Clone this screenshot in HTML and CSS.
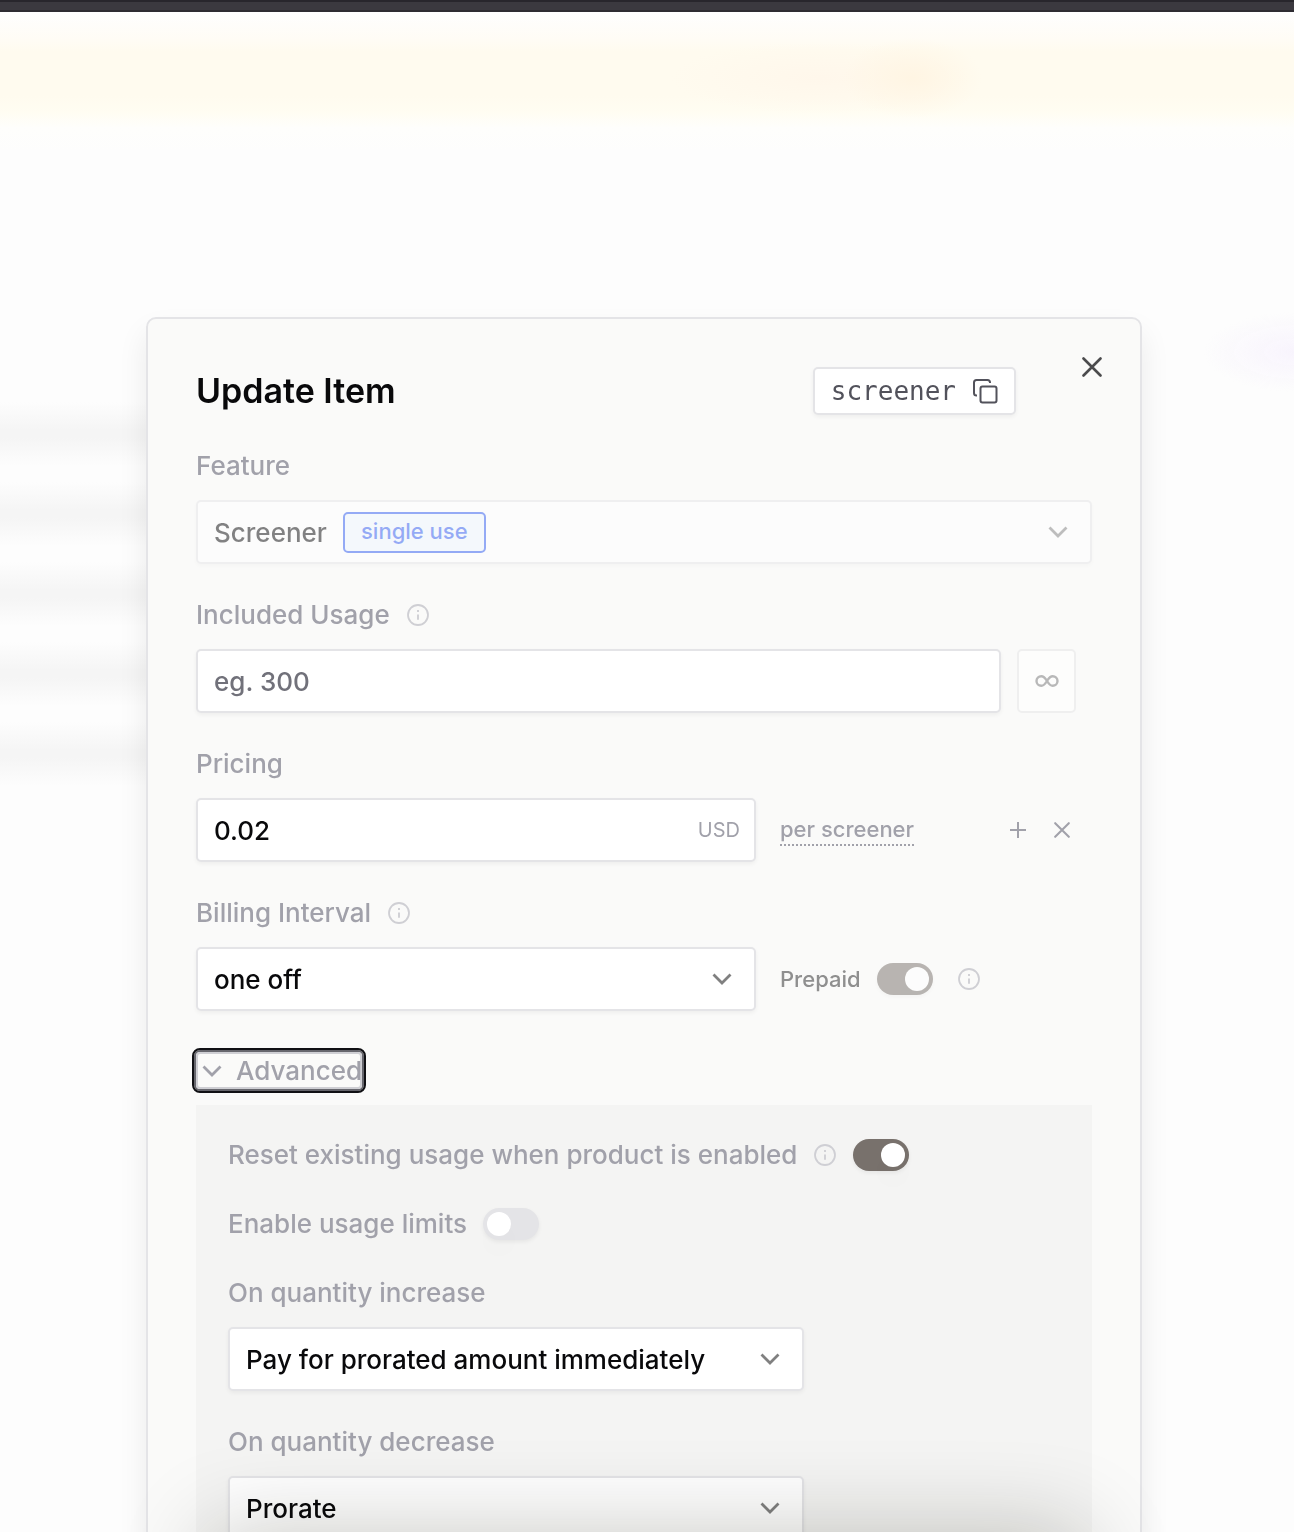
FILE: index.html
```
<!DOCTYPE html>
<html lang="en">
<head>
    <meta charset="UTF-8">
    <meta name="viewport" content="width=device-width, initial-scale=1.0">
    <title>Update Item</title>
    <link rel="stylesheet" href="styles.css">
</head>
<body>
    <svg class="sprite" xmlns="http://www.w3.org/2000/svg" aria-hidden="true">
        <symbol id="chevron" viewBox="0 0 20 20">
            <path d="M1.500 5.500l8.500 8.500 8.500-8.500" fill="none" stroke="currentColor" stroke-width="2.800"/>
        </symbol>
        <symbol id="info" viewBox="0 0 24 24">
            <circle cx="12" cy="12" r="10" fill="none" stroke="currentColor" stroke-width="1.8"/>
            <path d="M12 11.4v5.4M12 7v2" fill="none" stroke="currentColor" stroke-width="1.9"/>
        </symbol>
        <symbol id="cross" viewBox="0 0 20 20">
            <path d="M1.5 1.5l17 17M18.5 1.5l-17 17" fill="none" stroke="currentColor" stroke-width="2.6" stroke-linecap="round"/>
        </symbol>
    </svg>
    <div class="page">
        <div class="topbar"></div>
        <div class="banner"></div>
        <div class="rows">
            <div class="row"></div>
            <div class="row"></div>
            <div class="row"></div>
            <div class="row"></div>
            <div class="row"></div>
        </div>
    </div>
    <main class="overlay">
        <form class="dialog" role="dialog" aria-labelledby="title">
            <button type="button" class="close" aria-label="Close">
                <svg width="20" height="20"><use href="#cross"/></svg>
            </button>
            <header class="dialog-header">
                <h1 id="title">Update Item</h1>
                <button type="button" class="copy-id">
                    screener
                    <svg width="26" height="26" viewBox="0 0 26 26" fill="none" stroke="currentColor" stroke-width="2">
                        <rect x="8.5" y="8.5" width="16" height="16" rx="2"/>
                        <path d="M5 17.5H4.5c-1.700 0-2.500-1-2.500-2.500V4.500C2 3 3 2 4.500 2H15.500C17 2 18 3 18 4.500V5"/>
                    </svg>
                </button>
            </header>

            <div class="fields">
                <div class="field">
                    <label class="label" for="feature">Feature</label>
                    <div class="select disabled">
                        <select id="feature" disabled>
                            <option>Screener</option>
                        </select>
                        <span class="tag">single use</span>
                        <svg class="chevron"><use href="#chevron"/></svg>
                    </div>
                </div>

                <div class="field">
                    <div class="label">
                        <label for="usage">Included Usage</label>
                        <svg class="info"><use href="#info"/></svg>
                    </div>
                    <div class="usage">
                        <input type="text" id="usage" class="input" placeholder="eg. 300">
                        <button type="button" class="unlimited" aria-label="Unlimited" disabled>
                            <svg width="24" height="14" viewBox="0 0 24 14" fill="none" stroke="currentColor" stroke-width="2.4">
                                <path d="M12 7C10.200 4 8.800 2.200 6.300 2.200a4.800 4.800 0 0 0 0 9.600C8.800 11.800 10.200 10 12 7s3.200-4.800 5.700-4.800a4.800 4.800 0 0 1 0 9.600C15.200 11.800 13.800 10 12 7z"/>
                            </svg>
                        </button>
                    </div>
                </div>

                <div class="field">
                    <label class="label" for="price">Pricing</label>
                    <div class="split">
                        <div class="price">
                            <input type="text" id="price" class="input" value="0.02">
                            <span class="currency">USD</span>
                        </div>
                        <div class="side">
                            <button type="button" class="per">per screener</button>
                            <div class="actions">
                                <button type="button" aria-label="Add tier">
                                    <svg width="16" height="16" viewBox="0 0 16 16"><path d="M8 0v16M0 8h16" stroke="currentColor" stroke-width="2"/></svg>
                                </button>
                                <button type="button" aria-label="Remove price">
                                    <svg width="16" height="16"><use href="#cross"/></svg>
                                </button>
                            </div>
                        </div>
                    </div>
                </div>

                <div class="field">
                    <div class="label">
                        <label for="interval">Billing Interval</label>
                        <svg class="info"><use href="#info"/></svg>
                    </div>
                    <div class="split">
                        <div class="select">
                            <select id="interval">
                                <option>one off</option>
                            </select>
                            <svg class="chevron"><use href="#chevron"/></svg>
                        </div>
                        <div class="side">
                            <label class="prepaid" for="prepaid">Prepaid</label>
                            <input type="checkbox" id="prepaid" class="switch" checked disabled>
                            <svg class="info"><use href="#info"/></svg>
                        </div>
                    </div>
                </div>
            </div>

            <button type="button" class="advanced" aria-expanded="true">
                <svg width="20" height="20"><use href="#chevron"/></svg>
                Advanced
            </button>

            <section class="panel">
                <div class="toggles">
                    <div class="label">
                        <label for="reset">Reset existing usage when product is enabled</label>
                        <svg class="info"><use href="#info"/></svg>
                        <input type="checkbox" id="reset" class="switch" checked>
                    </div>
                    <div class="label">
                        <label for="limits">Enable usage limits</label>
                        <input type="checkbox" id="limits" class="switch">
                    </div>
                </div>
                <div class="fields">
                    <div class="field">
                        <label class="label" for="increase">On quantity increase</label>
                        <div class="select">
                            <select id="increase">
                                <option>Pay for prorated amount immediately</option>
                            </select>
                            <svg class="chevron"><use href="#chevron"/></svg>
                        </div>
                    </div>
                    <div class="field">
                        <label class="label" for="decrease">On quantity decrease</label>
                        <div class="select">
                            <select id="decrease">
                                <option>Prorate</option>
                            </select>
                            <svg class="chevron"><use href="#chevron"/></svg>
                        </div>
                    </div>
                </div>
            </section>
        </form>
    </main>
    <div class="bottom-shade"></div>
</body>
</html>
```
FILE: styles.css
```
* {
    padding: 0;
    margin: 0;
    box-sizing: border-box;
}
body {
    background-color: #fdfdfd;
    font-family: Inter, "Liberation Sans", sans-serif;
    font-size: 26px;
    font-weight: 500;
    line-height: 32px;
    color: #09090b;
    overflow: hidden;
}
input, select, button {
    font: inherit;
    color: inherit;
}
button {
    display: flex;
    justify-content: center;
    align-items: center;
    background-color: transparent;
    border: none;
    cursor: pointer;
}
svg {
    flex-shrink: 0;
}
.sprite {
    display: none;
}

/* blurred page behind the dialog */
.page {
    position: fixed;
    inset: 0;
    background: radial-gradient(ellipse 90px 40px at 100% 352px, #f8f4fd, transparent);
}
.topbar {
    height: 12px;
    background-color: #3b393f;
    border-top: 2px solid #28262c;
    border-bottom: 2px solid #2e2c32;
}
.banner {
    height: 140px;
    background:
        radial-gradient(ellipse 70px 40px at 912px 66px, #fff5e3, transparent),
        radial-gradient(ellipse 150px 36px at 820px 66px, #fff7eb, transparent),
        linear-gradient(#fefefe, #fffcf5 28px, #fffbef 40px, #fffbef 84px, #fffdf2 100px, #fefefc 116px, #fdfdfd);
}
.rows {
    margin-top: 242px;
}
.row {
    height: 80px;
    background: linear-gradient(#fdfdfd 10%, #f5f5f5 45%, #f5f5f5 55%, #fdfdfd 90%);
    width: 200px;
}

.overlay {
    position: relative;
    padding: 317px 152px 0 146px;
}
.dialog {
    position: relative;
    padding: 48px 48px 64px;
    background-color: #fafaf9;
    border: 2px solid #e4e4e7;
    border-radius: 10px;
    box-shadow: 0 16px 30px rgba(0, 0, 0, 0.08);
}
.close {
    position: absolute;
    top: 32px;
    right: 32px;
    width: 32px;
    height: 32px;
    color: #4b4b4d;
}
.dialog-header {
    display: flex;
    justify-content: space-between;
    align-items: center;
    padding-right: 76px;
    margin-bottom: 35px;
}
.dialog-header h1 {
    font-size: 34px;
    font-weight: 600;
    line-height: 48px;
}
.copy-id {
    height: 48px;
    gap: 16px;
    padding: 0 16px;
    background-color: #fff;
    border: 2px solid #e4e4e7;
    border-radius: 5px;
    box-shadow: 0 2px 4px rgba(0, 0, 0, 0.05);
    color: #52525b;
    font-family: "DejaVu Sans Mono", monospace;
    font-weight: 400;
}

.fields {
    display: flex;
    flex-direction: column;
    gap: 35px;
}
.field {
    display: flex;
    flex-direction: column;
    gap: 18px;
}
.label {
    display: flex;
    align-items: center;
    gap: 16px;
    color: #a1a1aa;
}
.info {
    width: 24px;
    height: 24px;
    color: #cfcfd4;
}
.input, .select select {
    width: 100%;
    height: 64px;
    padding: 0 16px;
    background-color: #fff;
    border: 2px solid #e4e4e7;
    border-radius: 5px;
    box-shadow: 0 2px 4px rgba(0, 0, 0, 0.05);
    outline: none;
}
.input::placeholder {
    color: #71717a;
}
.select {
    position: relative;
    display: flex;
    align-items: center;
}
.select select {
    appearance: none;
    padding-top: 2px;
    opacity: 1;
}
.select .chevron {
    position: absolute;
    right: 24px;
    width: 20px;
    height: 20px;
    color: #808080;
    pointer-events: none;
}
.select.disabled {
    opacity: 0.5;
}
.tag {
    position: absolute;
    left: 147px;
    height: 41px;
    padding: 0 16px;
    background-color: #eff6ff;
    border: 2px solid #2f5bf0;
    border-radius: 5px;
    color: #2f5bf0;
    font-size: 22px;
    line-height: 35px;
}
.usage {
    display: flex;
    gap: 16px;
    padding-right: 16px;
}
.unlimited {
    width: 59px;
    height: 64px;
    flex-shrink: 0;
    background-color: #fdfdfc;
    border: 2px solid #efefef;
    border-radius: 5px;
    color: #b8b8b8;
}
.split {
    display: grid;
    grid-template-columns: 5fr 3fr;
}
.side {
    display: flex;
    align-items: center;
    gap: 16px;
    padding-left: 24px;
    color: #a1a1aa;
    font-size: 22px;
}
.side .info {
    margin-left: 8px;
}
.price {
    position: relative;
    display: flex;
    align-items: center;
}
.currency {
    position: absolute;
    right: 16px;
    color: #a1a1aa;
    font-size: 20px;
    font-weight: 400;
}
.per {
    border-bottom: 2px dotted #a1a1aa;
    line-height: 30px;
}
.actions {
    display: flex;
    gap: 28px;
    margin-left: auto;
    padding-right: 22px;
}
.prepaid {
    color: #8f8f8f;
}
.switch {
    appearance: none;
    width: 56px;
    height: 32px;
    padding: 4px;
    border-radius: 16px;
    background-color: #e4e4e7;
    box-shadow: 0 2px 4px rgba(0, 0, 0, 0.06);
}
.switch::before {
    content: "";
    display: block;
    width: 24px;
    height: 24px;
    border-radius: 50%;
    background-color: #fff;
    box-shadow: 0 16px 24px rgba(0, 0, 0, 0.02);
}
.switch:checked {
    background-color: #78716c;
}
.switch:checked::before {
    margin-left: auto;
}
.switch:disabled {
    opacity: 0.5;
}

.advanced {
    height: 37px;
    margin-top: 41px;
    padding-left: 6px;
    gap: 14px;
    border-radius: 4px;
    color: #a1a1aa;
    outline: 2px solid #101014;
    outline-offset: 2px;
    box-shadow: 0 0 0 2px #66666d, inset 0 0 0 2px #cfcfd4;
}
.panel {
    display: flex;
    flex-direction: column;
    gap: 37px;
    margin-top: 16px;
    padding: 34px 32px;
    background-color: #f4f4f3;
}
.toggles {
    display: flex;
    flex-direction: column;
    gap: 37px;
}
.panel .select {
    max-width: 576px;
}

.bottom-shade {
    position: fixed;
    left: 210px;
    right: 210px;
    bottom: -200px;
    height: 200px;
    box-shadow: 0 0 90px rgba(20, 20, 10, 0.24);
    pointer-events: none;
}
@media (max-width: 900px) {
    .overlay {
        padding: 64px 16px 0;
    }
    .split {
        grid-template-columns: 1fr;
        gap: 16px;
    }
    .side {
        padding-left: 0;
    }
}
```
